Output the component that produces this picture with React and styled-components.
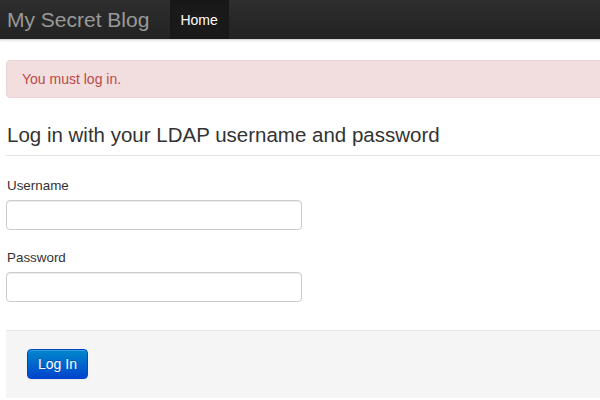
import styled, { createGlobalStyle } from 'styled-components';

const GlobalStyle = createGlobalStyle`
   html, body {
      margin: 0;
      padding: 0;
      background: #fff;
      overflow: hidden;
   }
   body {
      font-family: "Liberation Sans", Arial, sans-serif;
      font-size: 14px;
      line-height: 20px;
      color: #333;
   }
`

const Navbar = styled.header`
   height: 39px;
   background: linear-gradient(to bottom, #2e2e2e, #222222);
   border-bottom: 1px solid #d8d8d8;
   box-shadow: 0 1px 2px rgba(0, 0, 0, 0.1);
   display: flex;
   align-items: stretch;
   width: 1000px;
`

const Brand = styled.a`
   display: flex;
   align-items: center;
   padding: 0 21px 0 7px;
   font-size: 21px;
   color: #999;
   text-decoration: none;
`

const NavList = styled.ul`
   display: flex;
   margin: 0;
   padding: 0;
   list-style: none;
`

const NavItem = styled.li`
   background: ${({ $active }) => ($active ? '#1a1a1a' : 'transparent')};
   box-shadow: ${({ $active }) => ($active ? 'inset 0 3px 8px rgba(0,0,0,0.125)' : 'none')};

   a {
      display: flex;
      align-items: center;
      height: 100%;
      padding: 0 11px 1px 10px;
      color: ${({ $active }) => ($active ? '#fff' : '#999')};
      text-decoration: none;
   }
`

const Container = styled.main`
   width: 940px;
   margin-left: 6px;
   padding-top: 20px;
`

const Alert = styled.div`
   background: #f2dede;
   border: 1px solid #eed3d7;
   color: #b94a48;
   border-radius: 4px;
   padding: 8px 15px;
   margin-bottom: 17px;
`

const Fieldset = styled.fieldset`
   border: 0;
   margin: 0;
   padding: 0;
`

const Legend = styled.legend`
   display: block;
   width: 100%;
   padding: 0 0 0 1px;
   margin-bottom: 20px;
   font-size: 20.5px;
   line-height: 40px;
   color: #333;
   border-bottom: 1px solid #e5e5e5;
`

const ControlGroup = styled.div`
   margin-bottom: 18px;
`

const Label = styled.label`
   display: block;
   margin-bottom: 4px;
   padding-left: 1px;
   font-size: 13.4px;
`

const Input = styled.input`
   display: block;
   box-sizing: border-box;
   width: 296px;
   height: 30px;
   padding: 4px 6px;
   margin: 0;
   font: inherit;
   border: 1px solid #ccc;
   border-radius: 4px;
   box-shadow: inset 0 1px 1px rgba(0, 0, 0, 0.075);
   background: #fff;
`

const FormActions = styled.div`
   margin-top: 10px;
   padding: 18px 21px 19px;
   background: #f5f5f5;
   border-top: 1px solid #e5e5e5;
`

const Button = styled.button`
   box-sizing: border-box;
   height: 30px;
   padding: 4px 10px;
   font: inherit;
   color: #fff;
   text-shadow: 0 -1px 0 rgba(0, 0, 0, 0.25);
   background: linear-gradient(to bottom, #0088cc, #0044cc);
   border: 1px solid #0044cc;
   border-radius: 4px;
   box-shadow: inset 0 1px 0 rgba(255, 255, 255, 0.2), 0 1px 2px rgba(0, 0, 0, 0.05);
   cursor: pointer;
`

export default function App() {
   return (
      <>
         <GlobalStyle />
         <Navbar>
            <Brand href="#">My Secret Blog</Brand>
            <NavList>
               <NavItem $active><a href="#">Home</a></NavItem>
            </NavList>
         </Navbar>
         <Container>
            <Alert>You must log in.</Alert>
            <form onSubmit={(e) => e.preventDefault()}>
               <Fieldset>
                  <Legend>Log in with your LDAP username and password</Legend>
                  <ControlGroup>
                     <Label htmlFor="username">Username</Label>
                     <Input id="username" type="text" />
                  </ControlGroup>
                  <ControlGroup>
                     <Label htmlFor="password">Password</Label>
                     <Input id="password" type="password" />
                  </ControlGroup>
               </Fieldset>
               <FormActions>
                  <Button type="submit">Log In</Button>
               </FormActions>
            </form>
         </Container>
      </>
   )
}
